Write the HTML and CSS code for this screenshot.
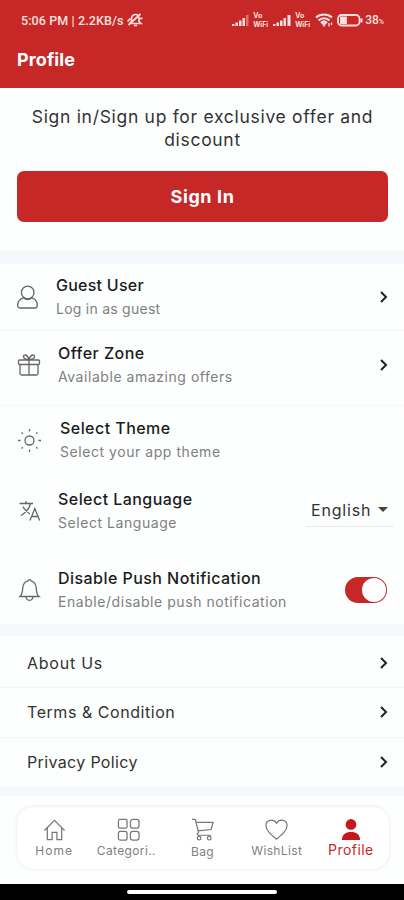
FILE: index.html
```html
<!DOCTYPE html>
<html lang="en">
<head>
  <meta charset="UTF-8" />
  <meta name="viewport" content="width=device-width, initial-scale=1.0"/>
  <title>Profile</title>
  <link rel="stylesheet" href="styles.css">
</head>
<body>
  <header>
    <div class="status-bar">
      <span class="status-time">5:06 PM | 2.2KB/s</span>
      <svg class="mute" width="18" height="16" viewBox="0 0 17 16" fill="none" stroke="#fbe0df" stroke-width="1.7">
        <path d="M3 11.5 5 9.5V6.5C5 4 7 2.5 9 2.5s3.500 1.500 3.500 4v3l2 2H5M7.500 13.500h3M2 13 14 2M1 9.500l3-3M13 7l3-1"/>
      </svg>
      <div class="status-icons">
        <svg class="signal" width="18" height="13" viewBox="0 0 18 13" fill="#fbe0df">
          <path d="M0 10h2.500v2H0zM3.500 8.500H6V12H3.500zM7 6.500h2.500V12H7zM10.500 4H13v8h-2.500z"/><path opacity=".4" d="M14 1h2.500v11H14z"/>
        </svg>
        <span class="vowifi"><b>Vo</b><b>WiFi</b></span>
        <svg class="signal" width="19" height="13" viewBox="0 0 19 13" fill="#fbe0df">
          <path d="M0 10h2.500v2H0zM3.500 8.500H6V12H3.500zM7 6.500h2.500V12H7zM10.500 4H13v8h-2.500zM14.500 1h3v11h-3z"/>
        </svg>
        <span class="vowifi"><b>Vo</b><b>WiFi</b></span>
        <svg class="wifi" width="18" height="14" viewBox="0 0 18 14" fill="none" stroke="#fbe0df" stroke-width="2.200">
          <path d="M1 4.500c4.500-4 11.500-4 16 0M3.500 7.500c3-3 8-3 11 0M6 10c2-2 4-2 6 0"/><path d="M7.500 10.500h3L9 13zM14 10v3.500M16.500 9.500V12" stroke-width="1.300"/>
        </svg>
        <svg class="battery" width="26" height="13" viewBox="0 0 26 13" fill="none" stroke="#fbe0df" stroke-width="1.800">
          <rect x="1" y="1" width="21.500" height="10.500" rx="3.500"/><path d="M4 3.500h5V9H4z" fill="#fbe0df"/><path d="M24.500 4.500v4" stroke-width="2"/>
        </svg>
        <span class="percent">38<small>%</small></span>
      </div>
    </div>
    <h1>Profile</h1>
  </header>

  <section class="signin">
    <p>Sign in/Sign up for exclusive offer and <br>discount</p>
    <button>Sign In</button>
  </section>

  <section class="settings">
    <div class="row guest">
      <svg class="icon" viewBox="0 0 24 24"><path d="M6.500 12.800C3 13.800 .6 17 .6 20.500c0 1.800.9 2.500 2.400 2.500h15c1.500 0 2.300-.9 2.300-2.500 0-3.500-2-6.700-5.500-7.700-2.500 2.200-5.800 2.200-8.300 0z"/><circle cx="10.700" cy="7.500" r="6.300"/></svg>
      <div class="text"><h2>Guest User</h2><p>Log in as guest</p></div>
      <svg class="chevron" viewBox="0 0 8 12"><path d="m1 1 5 5-5 5"/></svg>
    </div>
    <div class="row offer">
      <svg class="icon" viewBox="0 0 24 24"><rect x="1.500" y="7" width="21" height="4.500" rx="1"/><path d="M3 11.500V20.500c0 1 .6 1.500 1.500 1.500h15c.9 0 1.500-.5 1.500-1.500v-9M12 7v15M12 6.500C9 6.500 6.500 5.500 6.500 3.500S10 .5 12 6.500c2-6 5.500-5 5.500-3S15 6.500 12 6.500z"/></svg>
      <div class="text"><h2>Offer Zone</h2><p>Available amazing offers</p></div>
      <svg class="chevron" viewBox="0 0 8 12"><path d="m1 1 5 5-5 5"/></svg>
    </div>
    <div class="row theme">
      <svg class="icon" viewBox="0 0 24 24"><circle cx="12.500" cy="12.500" r="4.500"/><path d="M12.500 1v2.500M12.500 21.500V24M1 12.500h2.500M21.500 12.500H24M4.500 4.500l1.300 1.300M19.200 19.200l1.300 1.300M4.500 20.500l1.300-1.300M19.200 5.800l1.300-1.300"/></svg>
      <div class="text"><h2>Select Theme</h2><p>Select your app theme</p></div>
    </div>
    <div class="row language">
      <svg class="icon" viewBox="0 0 24 24"><path d="M2.500 4.500h13.500M9 2v2.500M13.500 4.500C12.500 9 9 13.500 4 16.500M6 7.500c1.500 3 4 5.500 7 7.500M13 21.500l4.800-12 4.800 12M14.500 17.500h6.500"/></svg>
      <div class="text"><h2>Select Language</h2><p>Select Language</p></div>
      <div class="dropdown"><span>English</span><i class="caret"></i></div>
    </div>
    <div class="row push">
      <svg class="icon" viewBox="0 0 24 24"><path d="M3 18.500c2-1.500 2.500-4.500 2.700-8C5.900 6 8 3.500 11 2.800c0-1.500 3-1.500 3 0 3 .7 5.100 3.200 5.300 7.700.2 3.500.7 6.500 2.700 8zM9 18.800c.5 4.700 6.500 4.700 7 0"/></svg>
      <div class="text"><h2>Disable Push Notification</h2><p>Enable/disable push notification</p></div>
      <div class="toggle"></div>
    </div>
  </section>

  <section class="links">
    <div class="link"><span class="about">About Us</span><svg class="chevron" viewBox="0 0 8 12"><path d="m1 1 5 5-5 5"/></svg></div>
    <div class="link"><span class="terms">Terms &amp; Condition</span><svg class="chevron" viewBox="0 0 8 12"><path d="m1 1 5 5-5 5"/></svg></div>
    <div class="link"><span class="privacy">Privacy Policy</span><svg class="chevron" viewBox="0 0 8 12"><path d="m1 1 5 5-5 5"/></svg></div>
  </section>

  <nav>
    <div class="tab home">
      <svg viewBox="0 0 24 24"><path d="M1.500 13 12 2.500 22.500 13M4.500 10.500V22.500h5V15h5v7.500h5v-12"/></svg>
      <span>Home</span>
    </div>
    <div class="tab categories">
      <svg viewBox="0 0 24 24"><rect x="1.500" y="1.500" width="9" height="9" rx="1.500"/><rect x="14" y="1.500" width="9" height="9" rx="2.500"/><rect x="1.500" y="14" width="9" height="9" rx="2"/><rect x="14" y="14" width="9" height="9" rx="2.500"/></svg>
      <span>Categori..</span>
    </div>
    <div class="tab bag">
      <svg viewBox="0 0 24 24"><path d="M1 1.500h3.500L8 15.500M5.200 4.500H23l-2 7.500-14 1.500M8 15.500c-2 0-2 2.500 0 2.500h13"/><circle cx="8.500" cy="21" r="1.900"/><circle cx="19" cy="21" r="1.900"/></svg>
      <span>Bag</span>
    </div>
    <div class="tab wish">
      <svg viewBox="0 0 24 24"><path d="M12 22C6 17 1 13 1 7.800 1 1.500 9 .5 12 5.500 15 .5 23 1.500 23 7.800 23 13 18 17 12 22z"/></svg>
      <span>WishList</span>
    </div>
    <div class="tab profile">
      <svg viewBox="0 0 24 24"><circle cx="12.500" cy="6.700" r="5.600"/><path d="M3 23c0-6 4-8.500 9.500-8.500S22 17 22 23z"/></svg>
      <span>Profile</span>
    </div>
  </nav>

  <div class="home-bar"><i></i></div>
</body>
</html>
```
FILE: styles.css
```css
* {
  box-sizing: border-box;
}
body {
  font-family: Inter, sans-serif;
  background: #fdfefe;
  color: #222;
  margin: 0;
  width: 404px;
  height: 900px;
  display: flex;
  flex-direction: column;
  overflow: hidden;
}
h1, h2, p {
  margin: 0;
}
svg {
  flex: none;
}
header {
  background: #c62828;
  color: white;
  height: 88px;
}
.status-bar {
  display: flex;
  align-items: center;
  height: 40px;
  padding: 0 20px 0 21px;
  color: #fbe0df;
}
.status-time {
  font: 500 12.5px Roboto, sans-serif;
  letter-spacing: 0.1px;
  white-space: nowrap;
}
.mute {
  margin-left: 3px;
}
.status-icons {
  display: flex;
  align-items: center;
  margin-left: auto;
}
.vowifi {
  display: flex;
  flex-direction: column;
  width: 18px;
  margin: 0 2px 0 3px;
  font-size: 7px;
  line-height: 9px;
  letter-spacing: -0.1px;
}
.wifi {
  margin-right: 4px;
}
.percent {
  font: 500 12px Roboto, sans-serif;
  margin-left: 2px;
}
.percent small {
  font-size: 7px;
}
h1 {
  font-size: 18px;
  line-height: 24px;
  font-weight: 700;
  letter-spacing: 0.1px;
  padding: 8px 0 0 17px;
}
.signin {
  height: 162px;
  padding: 17px 16px 0 17px;
}
.signin p {
  text-align: center;
  font-size: 17.5px;
  line-height: 23px;
  letter-spacing: 0.7px;
  color: #333;
}
.signin button {
  display: block;
  width: 100%;
  height: 51px;
  margin-top: 20px;
  border: none;
  border-radius: 7px;
  background: #c62828;
  color: white;
  font: 700 18px Inter, sans-serif;
  letter-spacing: 0.6px;
}
.settings {
  border-top: 14px solid #f7f8fc;
  border-bottom: 12px solid #f7f8fc;
  height: 386px;
}
.row {
  display: flex;
  align-items: center;
  padding: 0 15px 0 17px;
}
.icon {
  width: 24px;
  height: 24px;
  fill: none;
  stroke: #666;
  stroke-width: 1.3;
}
.text {
  flex: 1;
  padding-left: 17px;
  white-space: nowrap;
}
.text h2 {
  font-size: 16px;
  line-height: 24px;
  font-weight: 500;
  letter-spacing: 0.45px;
  color: #1c1c1c;
}
.text p {
  font-size: 14px;
  line-height: 24px;
  letter-spacing: 0.55px;
  color: #808080;
}
.chevron {
  width: 8px;
  height: 12px;
  margin-right: 1px;
  fill: none;
  stroke: #222;
  stroke-width: 2;
}
.guest {
  height: 67px;
  border-bottom: 2px solid #fafafc;
}
.guest .text {
  padding: 1px 0 0 15px;
}
.guest h2, .guest p {
  letter-spacing: 0.25px;
}
.offer {
  height: 76px;
  padding-bottom: 6px;
  border-bottom: 3px solid #fafafc;
}
.theme {
  height: 66px;
}
.theme .text {
  padding-left: 19px;
}
.language {
  height: 76px;
  padding-right: 10px;
}
.dropdown {
  display: flex;
  align-items: center;
  width: 88px;
  height: 32px;
  padding: 0 6px 2px 5px;
  border-bottom: 1px solid #eaeaec;
  font-size: 16px;
  letter-spacing: 0.8px;
  color: #333;
}
.caret {
  margin-left: auto;
  border: 5px solid transparent;
  border-top-color: #444;
  border-bottom: 0;
}
.push {
  height: 82px;
  padding-right: 17px;
}
.toggle {
  display: flex;
  justify-content: flex-end;
  width: 42px;
  height: 26px;
  padding: 1px;
  border-radius: 13px;
  background: #c62828;
}
.toggle::after {
  content: "";
  width: 24px;
  height: 24px;
  border-radius: 50%;
  background: white;
}
.links {
  height: 160px;
  border-bottom: 10px solid #f7f8fc;
}
.link {
  display: flex;
  align-items: center;
  justify-content: space-between;
  height: 49.5px;
  padding: 0 15px 0 27px;
  font-size: 16px;
  color: #333;
}
.link:first-child {
  height: 52px;
  padding-top: 3px;
}
.link:not(:last-child) {
  border-bottom: 1px solid #f4f4f6;
}
.about {
  letter-spacing: 0.75px;
}
.terms {
  letter-spacing: 0.55px;
}
.privacy {
  letter-spacing: 0.35px;
}
nav {
  display: flex;
  height: 62px;
  margin: 11px 15px 0 17px;
  padding: 0 1px 0 0;
  border-radius: 17px;
  background: white;
  box-shadow: 0 0 5px rgba(0, 0, 0, 0.09);
}
.tab {
  flex: 1;
  display: flex;
  flex-direction: column;
  align-items: center;
  padding-top: 11px;
  font-size: 12px;
  line-height: 19px;
  letter-spacing: 0.35px;
  color: #808080;
}
.tab svg {
  width: 23px;
  height: 23px;
  fill: none;
  stroke: #777;
  stroke-width: 1.3;
}
.home {
  letter-spacing: 1px;
}
.categories span {
  margin-right: 4px;
}
.bag {
  line-height: 21px;
}
.tab.profile {
  color: #c62828;
  font-size: 14px;
  line-height: 18px;
  letter-spacing: 0.45px;
}
.tab.profile svg {
  fill: #c6181c;
  stroke: none;
}
.home-bar {
  display: flex;
  align-items: center;
  justify-content: center;
  height: 16px;
  margin-top: auto;
  background: black;
}
.home-bar i {
  width: 150px;
  height: 4px;
  border-radius: 2px;
  background: white;
}
```
